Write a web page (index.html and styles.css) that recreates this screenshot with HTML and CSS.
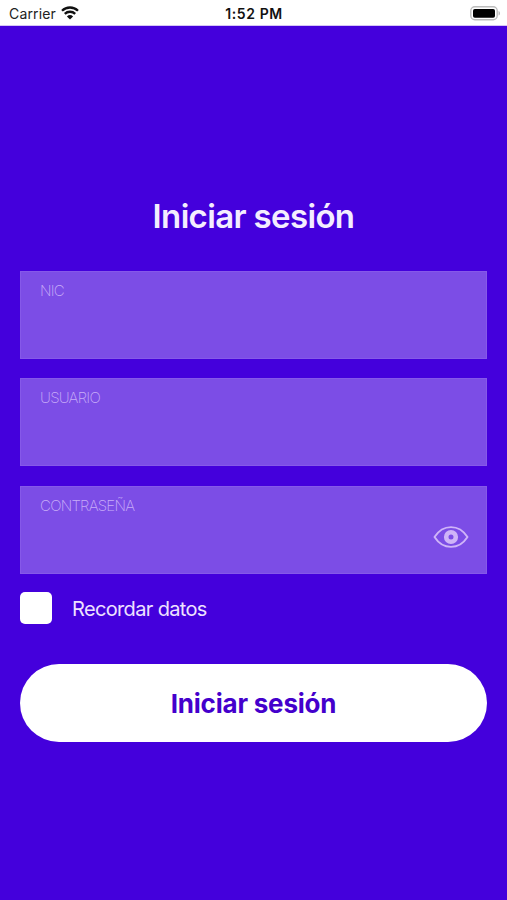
FILE: index.html
```html
<!DOCTYPE html>
<html lang="es">
<head>
    <meta charset="UTF-8">
    <meta name="viewport" content="width=device-width, initial-scale=1.0">
    <title>Iniciar sesión</title>
    <link rel="stylesheet" href="styles.css">
</head>
<body>

<!-- Status bar -->
<header class="status-bar">
    <div class="status-left">
        <span class="carrier">Carrier</span>
        <svg class="wifi" viewBox="0 0 18 14" width="18" height="14">
            <path d="M1 4.8a11.4 11.4 0 0 1 16 0M3.8 7.9a7.4 7.4 0 0 1 10.4 0" fill="none" stroke="#111" stroke-width="2.3"/>
            <path d="M9 13.6 5.9 10.4a4.5 4.5 0 0 1 6.2 0z" fill="#111"/>
        </svg>
    </div>
    <span class="time">1:52 PM</span>
    <div class="status-right">
        <svg class="battery" viewBox="0 0 31 15" width="31" height="15">
            <rect x="0.8" y="0.8" width="26.4" height="13" rx="4" fill="#fff" stroke="#bcbcbc" stroke-width="1.4"/>
            <rect x="3" y="3" width="22" height="8.7" rx="1.8" fill="#000"/>
            <path d="M28.6 5c1.6.6 1.6 4 0 4.6z" fill="#aaa"/>
        </svg>
    </div>
</header>

<main class="container">
    <h1>Iniciar sesión</h1>

    <form id="loginForm">
        <div class="field">
            <label for="nic">NIC</label>
            <input type="text" id="nic">
        </div>
        <div class="field">
            <label for="usuario">USUARIO</label>
            <input type="text" id="usuario">
        </div>
        <div class="field">
            <label for="password">CONTRASEÑA</label>
            <div class="password-row">
                <input type="password" id="password">
                <svg class="eye" viewBox="0 0 36 24" width="36" height="24">
                    <path d="M1.5 12C10 -1.2 26 -1.2 34.5 12C26 25.2 10 25.2 1.5 12z" fill="none" stroke="currentColor" stroke-width="1.9" stroke-linejoin="round"/>
                    <circle cx="18" cy="12" r="4.8" fill="none" stroke="currentColor" stroke-width="4.6"/>
                </svg>
            </div>
        </div>

        <label class="remember">
            <input type="checkbox" class="checkbox">
            <span>Recordar datos</span>
        </label>

        <button type="submit">Iniciar sesión</button>
    </form>
</main>

</body>
</html>
```

FILE: styles.css
```css
* {
    margin: 0;
    padding: 0;
    box-sizing: border-box;
}

body {
    font-family: Inter, 'Liberation Sans', sans-serif;
    background: #4400dc;
    height: 100vh;
    color: white;
    overflow: hidden;
}

.status-bar {
    display: grid;
    grid-template-columns: 1fr auto 1fr;
    align-items: center;
    height: 26px;
    padding: 1px 6px 0 9px;
    background: white;
    border-bottom: 1px solid #d5c5f6;
    color: #222;
    font-size: 14px;
}

.status-left {
    display: flex;
    align-items: center;
    gap: 5px;
}

.carrier {
    letter-spacing: 0.15px;
}

.time {
    margin-right: 2px;
    font-weight: 600;
    letter-spacing: 0.6px;
    color: #111;
}

.status-right {
    display: flex;
    justify-content: flex-end;
}

.container {
    padding: 170px 20px 0;
}

h1 {
    height: 75px;
    font-size: 33px;
    font-weight: 600;
    line-height: 40px;
    letter-spacing: -0.65px;
    text-align: center;
    color: #f4edff;
}

.field {
    height: 88px;
    margin-bottom: 19.4px;
    padding: 10px 17px 0 19px;
    background: #7c4de6;
    border: 1px solid #8659e9;
}

.field label {
    display: block;
    font-size: 15px;
    font-weight: 200;
    line-height: 18px;
    letter-spacing: -0.75px;
    color: #c9aef8;
}

.field input {
    width: 100%;
    height: 45px;
    background: transparent;
    border: none;
    outline: none;
    color: white;
    font-size: 20px;
}

.password-row {
    display: flex;
    align-items: center;
}

.eye {
    flex-shrink: 0;
    color: #cfb4f8;
}

.remember {
    display: flex;
    align-items: center;
    gap: 20px;
    height: 32px;
    margin: -1.4px 0 40px;
    font-size: 20px;
    letter-spacing: -0.65px;
    color: #eee2ff;
}

.remember span {
    padding-top: 2px;
}

.remember .checkbox {
    appearance: none;
    width: 32px;
    height: 32px;
    background: white;
    border-radius: 5px;
}

button {
    display: block;
    width: 100%;
    height: 78px;
    padding-top: 2px;
    border: none;
    border-radius: 39px;
    background: white;
    color: #4400cc;
    font-family: inherit;
    font-size: 26px;
    font-weight: 700;
    letter-spacing: -0.2px;
    cursor: pointer;
}
```
